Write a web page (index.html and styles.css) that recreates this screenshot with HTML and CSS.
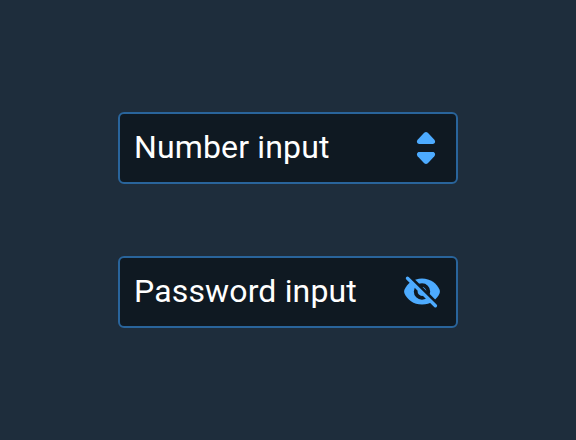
FILE: index.html
```html
<!DOCTYPE html>
<html lang="en">
<head>
<meta charset="utf-8">
<title>Inputs</title>
<link rel="stylesheet" href="styles.css">
</head>
<body>
<main class="inputs">
  <div class="field">
    <span class="field-text">Number input</span>
    <svg class="stepper" viewBox="0 0 20 34" aria-hidden="true">
      <path d="M8.200 1.800 1.600 8.800C.2 10.500 1 13 3.200 13H16.800C19 13 19.800 10.500 18.400 8.800L11.800 1.800Q10 .2 8.200 1.800Z"/>
      <path d="M8.200 32.200 1.600 25.200C.2 23.500 1 21 3.200 21H16.800C19 21 19.800 23.500 18.400 25.200L11.800 32.200Q10 33.800 8.200 32.200Z"/>
    </svg>
  </div>
  <div class="field">
    <span class="field-text">Password input</span>
    <svg class="eye" viewBox="0 0 40 40" aria-hidden="true">
      <path d="M20 6.500C11.500 6.500 5 11.500 2.300 18.100Q1.900 19.500 2.300 20.900C5 27.500 11.500 32.500 20 32.500s15-5 17.700-11.600Q38.100 19.500 37.700 18.100C35 11.500 28.500 6.500 20 6.500z"/>
      <circle class="ring" cx="20" cy="19.500" r="6.300"/>
      <path class="cut-line" d="M7.200 4.300 36.600 33.200"/>
      <path class="slash" d="M5.500 6.300 33.400 33.700"/>
    </svg>
  </div>
</main>
</body>
</html>
```
FILE: styles.css
```css
body {
  margin: 0;
  min-height: 100vh;
  display: grid;
  place-items: center;
  background: #1e2d3c;
  font-family: Roboto, sans-serif;
}
.inputs {
  display: grid;
  gap: 72px;
}
.field {
  box-sizing: border-box;
  width: 340px;
  height: 72px;
  padding: 0 14px;
  display: flex;
  align-items: center;
  justify-content: space-between;
  border: 2px solid #29649b;
  border-radius: 6px;
  background: #0f1922;
  color: #fff;
}
.field-text {
  font-size: 32px;
  line-height: 40px;
  letter-spacing: 0.15px;
  padding-bottom: 2px;
}
.stepper {
  width: 20px;
  height: 34px;
  margin-right: 6px;
  fill: #4dabff;
}
.eye {
  width: 40px;
  height: 40px;
  fill: #4dabff;
}
.ring {
  fill: #4dabff;
  stroke: #0f1922;
  stroke-width: 3.8;
}
.cut-line {
  stroke: #0f1922;
  stroke-width: 3.4;
}
.slash {
  stroke: #4dabff;
  stroke-width: 3.4;
  stroke-linecap: round;
}
```
